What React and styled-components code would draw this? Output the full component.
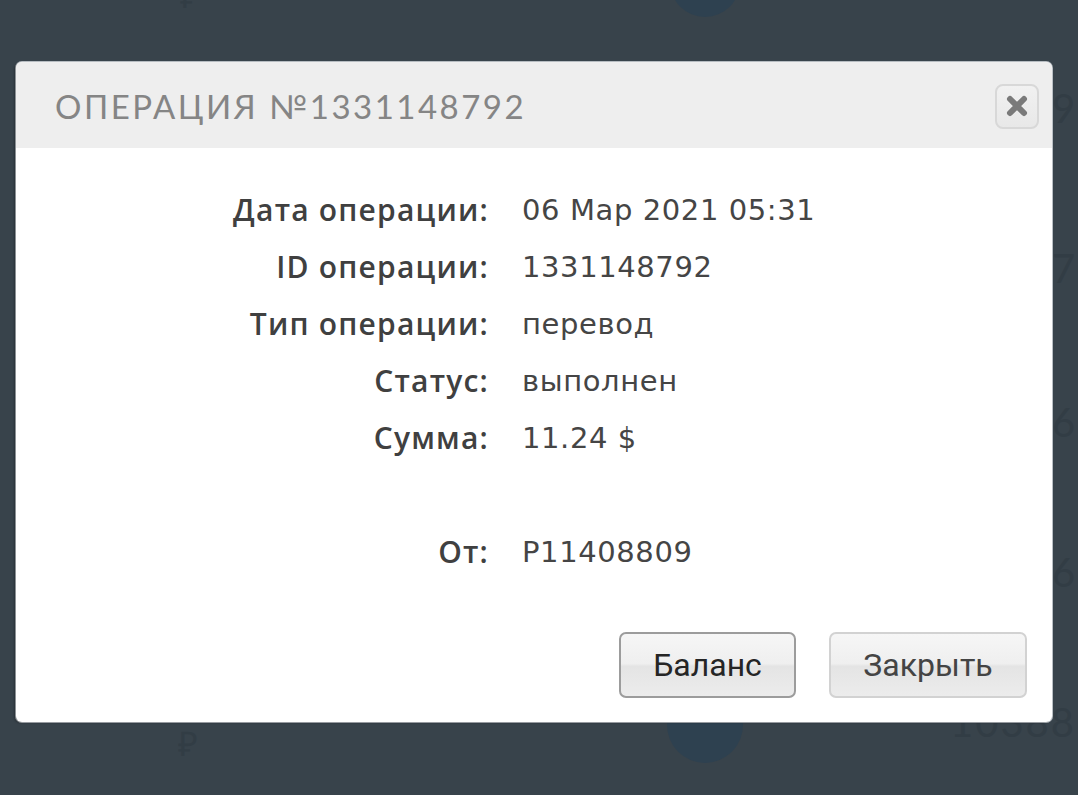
import React from "react";
import styled, { createGlobalStyle } from "styled-components";

const Global = createGlobalStyle`
  html, body { margin: 0; padding: 0; background: #38434b; }
  body { font-family: "Open Sans", "Liberation Sans", sans-serif; overflow: hidden; }
  * { box-sizing: border-box; }
`;

const Page = styled.div`
  position: relative;
  width: 1078px;
  height: 795px;
  background: #38434b;
  padding: 62px 0 0 16px;
  overflow: hidden;
`;

const Backdrop = styled.div`
  position: absolute;
  inset: 0;
  pointer-events: none;
`;

const Circle = styled.div`
  position: absolute;
  left: ${(p) => p.$x}px;
  top: ${(p) => p.$y}px;
  width: ${(p) => p.$size}px;
  height: ${(p) => p.$size}px;
  border-radius: 50%;
  background: #2e4150;
`;

const Faint = styled.div`
  position: absolute;
  left: ${(p) => p.$x}px;
  top: ${(p) => p.$y}px;
  font-family: "Lato", sans-serif;
  font-size: ${(p) => p.$size || 40}px;
  color: #323d45;
  letter-spacing: 2px;
  line-height: 1;
`;

const Dialog = styled.div`
  position: relative;
  width: 1036px;
  height: 660px;
  background: #ffffff;
  border-radius: 6px;
  box-shadow: -2px 1px 2px rgba(0, 0, 0, 0.25), 0 0 0 1px #b9bfc4;
  display: flex;
  flex-direction: column;
  overflow: hidden;
`;

const Header = styled.div`
  height: 86px;
  background: #eeeeee;
  display: flex;
  align-items: center;
  justify-content: space-between;
  padding: 0 13px 0 39px;
`;

const Title = styled.h1`
  margin: 0;
  font-family: "Lato", "Liberation Sans", sans-serif;
  font-weight: 400;
  font-size: 33px;
  letter-spacing: 2.5px;
  color: #858585;
  padding-top: 2px;
`;

const CloseBtn = styled.button`
  width: 44px;
  height: 45px;
  border: 2px solid #d8d8d8;
  border-radius: 8px;
  background: linear-gradient(#f1f1f1, #e8e8e8);
  display: flex;
  align-items: center;
  justify-content: center;
  padding: 0;
  margin-top: 2px;
`;

const Body = styled.div`
  flex: 1;
  display: flex;
  flex-direction: column;
  justify-content: space-between;
  padding: 33px 25px 24px 0;
`;

const Details = styled.div`
  display: grid;
  grid-template-columns: 473px auto;
  column-gap: 33px;
  grid-auto-rows: 57px;
  align-items: center;
`;

const Label = styled.div`
  text-align: right;
  font-family: "Open Sans", sans-serif;
  font-weight: 600;
  font-size: 30px;
  letter-spacing: 1.2px;
  color: #404040;
  white-space: nowrap;
`;

const Value = styled.div`
  font-family: "DejaVu Sans", "Open Sans", sans-serif;
  font-weight: 400;
  font-size: 29px;
  letter-spacing: 0.6px;
  color: #454545;
  white-space: nowrap;
`;

const Spacer = styled.div`
  grid-column: 1 / span 2;
`;

const Actions = styled.div`
  display: flex;
  justify-content: flex-end;
  gap: 33px;
`;

const Button = styled.button`
  height: 66px;
  width: ${(p) => p.$w}px;
  border-radius: 7px;
  border: 2px solid ${(p) => (p.$primary ? "#9c9c9c" : "#d2d2d2")};
  background: linear-gradient(#f6f6f6 0%, #efefef 48%, #e4e4e4 52%, #ececec 100%);
  font-family: "Roboto", sans-serif;
  font-size: 32px;
  color: ${(p) => (p.$primary ? "#252525" : "#444444")};
  padding: 0;
  cursor: pointer;
`;

const rows = [
  ["Дата операции:", "06 Мар 2021 05:31"],
  ["ID операции:", "1331148792"],
  ["Тип операции:", "перевод"],
  ["Статус:", "выполнен"],
  ["Сумма:", "11.24 $"],
];

export default function App() {
  return (
    <>
      <Global />
      <Page>
        <Backdrop>
          <Circle $x={670} $y={-53} $size={70} />
          <Circle $x={667} $y={687} $size={76} />
          <Faint $x={180} $y={-22} $size={34}>₽</Faint>
          <Faint $x={178} $y={726} $size={34}>₽</Faint>
          <Faint $x={1052} $y={88} $size={40}>92</Faint>
          <Faint $x={1052} $y={248} $size={40}>70</Faint>
          <Faint $x={1052} $y={402} $size={40}>6</Faint>
          <Faint $x={1052} $y={552} $size={40}>6</Faint>
          <Faint $x={950} $y={702} $size={40}>1038864</Faint>
        </Backdrop>
        <Dialog>
          <Header>
            <Title>ОПЕРАЦИЯ №1331148792</Title>
            <CloseBtn aria-label="close">
              <svg width="24" height="24" viewBox="0 0 24 24">
                <path
                  d="M5 5 L19 19 M19 5 L5 19"
                  stroke="#7a7a7a"
                  strokeWidth="6"
                  strokeLinecap="round"
                />
              </svg>
            </CloseBtn>
          </Header>
          <Body>
            <Details>
              {rows.map(([l, v]) => (
                <React.Fragment key={l}>
                  <Label>{l}</Label>
                  <Value>{v}</Value>
                </React.Fragment>
              ))}
              <Spacer />
              <Label>От:</Label>
              <Value>P11408809</Value>
            </Details>
            <Actions>
              <Button $primary $w={177}>Баланс</Button>
              <Button $w={198}>Закрыть</Button>
            </Actions>
          </Body>
        </Dialog>
      </Page>
    </>
  );
}
